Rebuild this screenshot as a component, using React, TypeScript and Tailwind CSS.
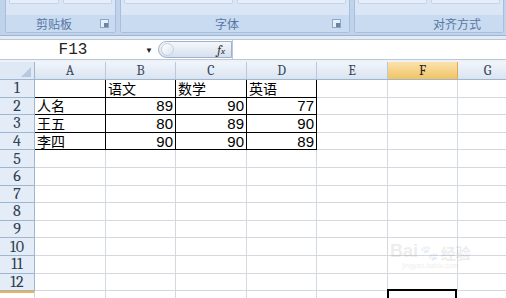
import React from "react";

const cols = [
  { key: "A", w: "w-[71px]" },
  { key: "B", w: "w-[70px]" },
  { key: "C", w: "w-[71px]" },
  { key: "D", w: "w-[70px]" },
  { key: "E", w: "w-[71px]" },
  { key: "F", w: "w-[70px]" },
  { key: "G", w: "w-[60px]" },
];

const data: Record<number, string[]> = {
  1: ["", "语文", "数学", "英语"],
  2: ["人名", "89", "90", "77"],
  3: ["王五", "80", "89", "90"],
  4: ["李四", "90", "90", "89"],
};

const cjk = "font-['Noto_Sans_CJK_SC',sans-serif]";
const sans = "font-['Liberation_Sans',sans-serif]";

function Launcher() {
  return (
    <div className="w-[9px] h-[9px] border border-[#8aa6c8] bg-[#e8eff8] flex items-end justify-end">
      <div className="w-[4px] h-[4px] bg-[#6b84a6]" />
    </div>
  );
}

function RibbonGroup({ label, w, textPad, launcher }: { label: string; w: string; textPad: string; launcher?: boolean }) {
  return (
    <div className={`${w} h-[33px] rounded-b-[3px] border border-t-0 border-[#a7bfdc] bg-[#dae6f5] flex flex-col`}>
      <div className="h-[15px] flex gap-[4px] px-[3px]">
        <div className="flex-1 h-[4px] rounded-b-[2px] border border-t-0 border-[#c3d4ea] bg-[#e6eef9]" />
        <div className="flex-1 h-[4px] rounded-b-[2px] border border-t-0 border-[#c3d4ea] bg-[#e6eef9]" />
      </div>
      <div className={`flex-1 bg-[#c8dbf1] flex items-center ${textPad}`}>
        <span className={`${cjk} text-[12px] text-[#5876a3] flex-1 leading-none`}>{label}</span>
        {launcher && <Launcher />}
      </div>
    </div>
  );
}

function Cell({ row, col, w }: { row: number; col: number; w: string }) {
  const value = data[row]?.[col] ?? "";
  const inTable = row >= 1 && row <= 4 && col <= 3;
  const isNum = /^\d+$/.test(value);
  const right = inTable ? "border-r-black" : "border-r-[#d4d9e0]";
  const bottom = inTable ? "border-b-black" : "border-b-[#d4d9e0]";
  return (
    <div
      className={`${w} h-full shrink-0 border-r border-b ${right} ${bottom} flex items-center px-[2px] ${
        isNum ? `justify-end ${sans} text-[15px]` : `${cjk} text-[14px]`
      } text-black leading-[15px]`}
    >
      {value}
    </div>
  );
}

export default function App() {
  const rows = Array.from({ length: 12 }, (_, i) => i + 1);
  return (
    <div className="w-[506px] h-[298px] overflow-hidden bg-white relative">
      {/* Ribbon */}
      <div className="h-[35px] bg-[#bfd3eb] flex items-start gap-[4px] pl-[5px]">
        <RibbonGroup label="剪贴板" w="w-[111px]" textPad="pl-[30px] pr-[6px]" launcher />
        <RibbonGroup label="字体" w="w-[230px]" textPad="pl-[94px] pr-[8px]" launcher />
        <RibbonGroup label="对齐方式" w="w-[150px]" textPad="pl-[78px]" />
      </div>
      <div className="h-[4px] bg-[#e3ebf6] border-t border-[#9fb6d3]" />

      {/* Formula bar */}
      <div className="h-[21px] bg-white border-y border-[#b9c8db] flex items-center">
        <div className="w-[140px] flex justify-center font-mono text-[16px] text-[#222] pl-[6px] leading-none">
          F13
        </div>
        <div className="w-[18px] flex justify-center text-[8px] text-[#222]">▼</div>
        <div className="w-[74px] h-[17px] rounded-l-full rounded-r-[2px] border border-[#9fb2cb] bg-gradient-to-b from-[#f4f7fb] to-[#d6e0ed] flex items-center justify-between pl-[2px] pr-[6px]">
          <div className="w-[13px] h-[13px] rounded-full border border-[#c5d1e0] bg-gradient-to-br from-white to-[#dbe4ef]" />
          <span className="font-serif italic text-[13px] text-[#333] leading-none">
            f<span className="text-[9px]">x</span>
          </span>
        </div>
        <div className="flex-1 h-full border-l border-[#b9c8db]" />
      </div>
      <div className="h-[2px] bg-[#eef2f7]" />

      {/* Column header */}
      <div className="h-[18px] flex border-b border-[#9eb6ce]">
        <div className="w-[35px] shrink-0 border-r border-[#9eb6ce] bg-[#dfe8f5] relative">
          <div className="absolute right-[3px] bottom-[2px] w-0 h-0 border-l-[10px] border-l-transparent border-b-[10px] border-b-[#b7c8df]" />
        </div>
        {cols.map((c) => (
          <div
            key={c.key}
            className={`${c.w} shrink-0 border-r ${
              c.key === "F"
                ? "bg-gradient-to-b from-[#fbe2ae] to-[#f1c463] border-[#e3a94a] text-[#222]"
                : "bg-gradient-to-b from-[#f1f5fb] to-[#dae4f1] border-[#b9c8db] text-[#3a4a5c]"
            } flex items-center justify-center font-serif text-[14px] leading-none`}
          >
            {c.key}
          </div>
        ))}
      </div>

      {/* Rows */}
      {rows.map((r) => (
        <div key={r} className="h-[17.6px] flex">
          <div className="w-[35px] shrink-0 bg-[#e4ecf7] border-r border-b border-[#9eb6ce] flex items-center justify-center font-serif text-[16px] text-[#2f3e52] leading-none">
            {r}
          </div>
          {cols.map((c, ci) => (
            <Cell key={c.key} row={r} col={ci} w={c.w} />
          ))}
        </div>
      ))}

      {/* Row 13 (partially visible) */}
      <div className="h-[10px] flex">
        <div className="w-[35px] shrink-0 border-t-2 border-[#f0b24a] bg-white border-r border-r-[#d4d9e0]" />
        {cols.map((c) => (
          <div
            key={c.key}
            className={`${c.w} shrink-0 ${
              c.key === "F" ? "border-2 border-black -mt-[2px] -ml-[1px]" : "border-r border-[#d4d9e0]"
            }`}
          />
        ))}
      </div>

      {/* watermark */}
      <div className="absolute left-[390px] top-[242px] flex flex-col items-center gap-[2px] opacity-[0.1] pointer-events-none">
        <div className="flex items-end gap-[2px] text-[#555]">
          <span className={`${sans} font-bold text-[18px] leading-none`}>Bai</span>
          <span className="text-[15px] leading-none">🐾</span>
          <span className={`${cjk} font-bold text-[15px] leading-none`}>经验</span>
        </div>
        <span className={`${sans} text-[7px] leading-none text-[#555]`}>jingyan.baidu.com</span>
      </div>
    </div>
  );
}
